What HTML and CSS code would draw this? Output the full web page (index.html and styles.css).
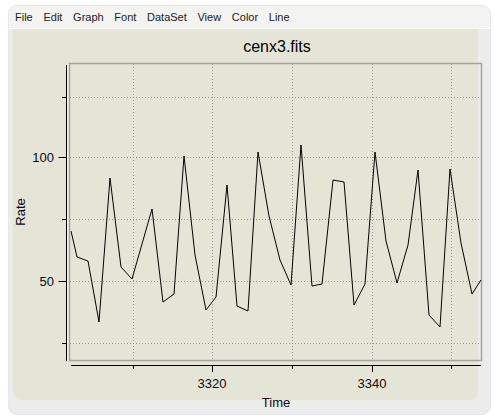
FILE: index.html
```html
<!DOCTYPE html>
<html>
<head>
<meta charset="utf-8">
<link rel="stylesheet" href="styles.css">
</head>
<body>
<div class="window">
  <div class="menubar">
    <span>File</span><span>Edit</span><span>Graph</span><span>Font</span><span>DataSet</span><span>View</span><span>Color</span><span>Line</span>
  </div>
  <div class="content">
    <svg class="plot" width="464" height="371" viewBox="13 29 464 371">
      <g class="grid">
        <line x1="70" y1="97.5" x2="481" y2="97.5"/>
        <line x1="70" y1="157.5" x2="481" y2="157.5"/>
        <line x1="70" y1="219.5" x2="481" y2="219.5"/>
        <line x1="70" y1="281.5" x2="481" y2="281.5"/>
        <line x1="70" y1="343.5" x2="481" y2="343.5"/>
        <line x1="133.5" y1="64" x2="133.5" y2="360"/>
        <line x1="212.5" y1="64" x2="212.5" y2="360"/>
        <line x1="292.5" y1="64" x2="292.5" y2="360"/>
        <line x1="372.5" y1="64" x2="372.5" y2="360"/>
        <line x1="451.5" y1="64" x2="451.5" y2="360"/>
      </g>
      <line class="hilite" x1="68" y1="64" x2="68" y2="361"/>
      <rect class="frame" x="69.5" y="63.5" width="412" height="297"/>
      <g class="axis">
        <line x1="66.5" y1="65" x2="66.5" y2="361"/>
        <line x1="71" y1="365.5" x2="481" y2="365.5"/>
        <line x1="62" y1="97.5" x2="66" y2="97.5"/>
        <line x1="58.5" y1="157.5" x2="66" y2="157.5"/>
        <line x1="62" y1="219.5" x2="66" y2="219.5"/>
        <line x1="58.5" y1="281.5" x2="66" y2="281.5"/>
        <line x1="62" y1="343.5" x2="66" y2="343.5"/>
        <line x1="133.5" y1="366" x2="133.5" y2="369"/>
        <line x1="212.5" y1="366" x2="212.5" y2="372"/>
        <line x1="292.5" y1="366" x2="292.5" y2="369"/>
        <line x1="372.5" y1="366" x2="372.5" y2="372"/>
        <line x1="451.5" y1="366" x2="451.5" y2="369"/>
      </g>
      <polyline class="data" points="71,231 77,257 88,261 99,322 110,178 121,267 132,279 152,209 163,302 174,294 184,156 195,255 206,310 216,297 227,185 237,306 248,311 258,152 269,216 280,260 291,285 301,145 312,286 322,284 333,180 344,182 354,305 365,284 375,152 386,241 397,283 408,245 418,170 429,315 440,327 450,169 461,243 472,294 481,280"/>
      <text class="title" x="277" y="52">cenx3.fits</text>
      <text class="lbl end" x="54" y="162">100</text>
      <text class="lbl end" x="54" y="286">50</text>
      <text class="lbl mid" x="212" y="388">3320</text>
      <text class="lbl mid" x="372" y="388">3340</text>
      <text class="lbl mid" x="276" y="407">Time</text>
      <text class="lbl mid" transform="translate(25 212) rotate(-90)">Rate</text>
    </svg>
  </div>
</div>
</body>
</html>
```

FILE: styles.css
```css
html, body {
  margin: 0;
  padding: 0;
  background: #ffffff;
}
body {
  font-family: "Liberation Sans", Arial, sans-serif;
}
.window {
  margin: 5px 0 0 8px;
  width: 481px;
  height: 408px;
  border: 1px solid #e4e9ef;
  border-radius: 9px;
  background: #ececea;
  display: flex;
  flex-direction: column;
}
.menubar {
  height: 22px;
  border-bottom: 1px solid #ffffff;
  background: #f3f3f1;
  border-radius: 8px 8px 0 0;
  display: flex;
  align-items: center;
  gap: 10.7px;
  padding-left: 6px;
  font-size: 11px;
  color: #222222;
}
.content {
  margin: 0 12px 0 4px;
  height: 371px;
  background: #e5e5d7;
  border-radius: 0 0 8px 8px;
}
.plot {
  display: block;
  overflow: visible;
}
.grid line {
  stroke: #9a9a92;
  stroke-width: 1;
  stroke-dasharray: 1 2;
}
.hilite {
  stroke: #ffffff;
  stroke-width: 1;
}
.frame {
  fill: none;
  stroke: #a4a49c;
  stroke-width: 1.5;
}
.axis line {
  stroke: #000000;
  stroke-width: 1;
}
.data {
  fill: none;
  stroke: #000000;
  stroke-width: 1;
  stroke-linejoin: miter;
}
.title {
  font-family: "Liberation Sans", Arial, sans-serif;
  font-size: 16px;
  text-anchor: middle;
  fill: #000000;
}
.lbl {
  font-family: "Liberation Sans", Arial, sans-serif;
  font-size: 13px;
  fill: #0a0a14;
}
.end {
  text-anchor: end;
}
.mid {
  text-anchor: middle;
}
```
